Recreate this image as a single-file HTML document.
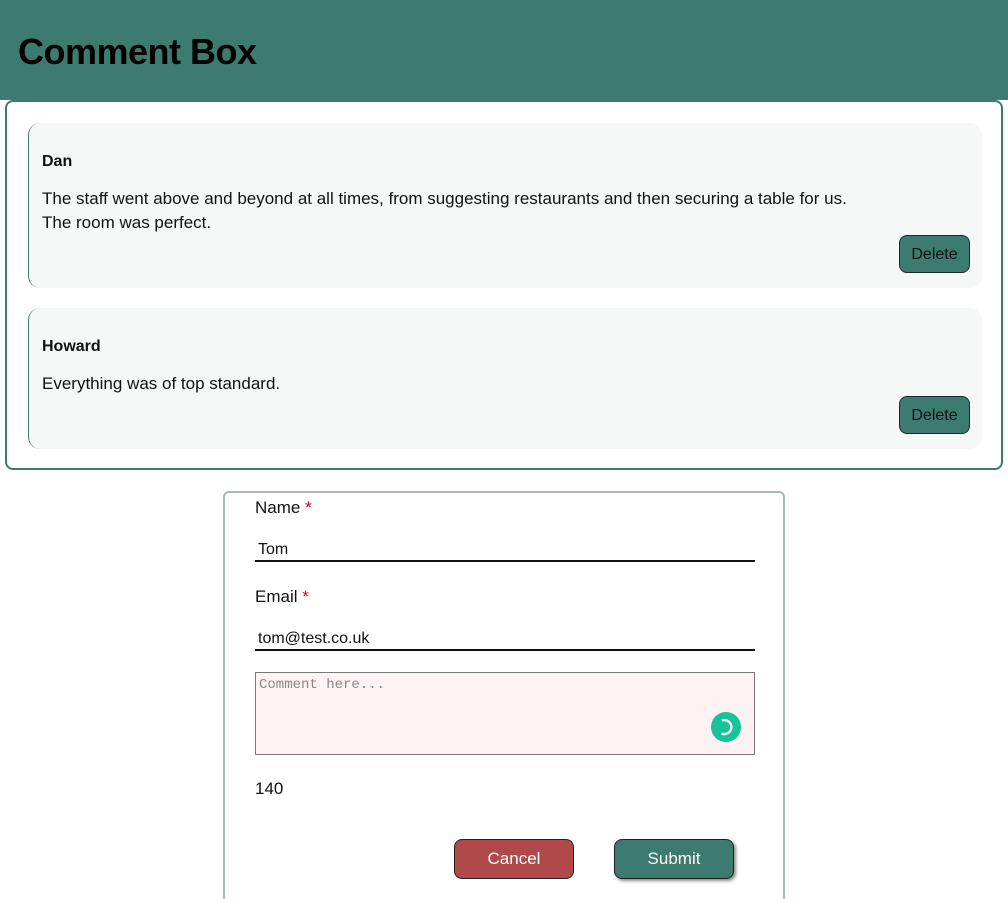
<!DOCTYPE html>
<html style="overflow:hidden;height:899px"><head><style>
body{margin:0;width:1008px;height:899px;overflow:hidden;background:#fff;font-family:"Liberation Sans",sans-serif;color:#111;position:relative}
.hd{position:absolute;left:0;top:0;width:1008px;height:100px;background:#3d7a70}
.hd h1{position:absolute;left:18px;top:31px;margin:0;font-size:36px;font-weight:bold;color:#000;letter-spacing:-0.5px}
.outer{position:absolute;left:5px;top:100px;width:994px;height:366px;border:2px solid #3d7a70;border-radius:8px}
.card{position:absolute;left:21px;width:953px;background:#f6f8f7;border-left:1.5px solid #3d7a70;border-radius:12px}
.name{position:absolute;left:13px;font-weight:bold;font-size:16px}
.txt{position:absolute;left:13px;font-size:17px;line-height:24px;width:920px}
.del{position:absolute;right:12px;width:71px;height:38px;box-sizing:border-box;background:#3d7a70;border:1px solid #1a2a28;border-radius:8px;font-size:16px;text-align:center;line-height:37px;color:#111}
.form{position:absolute;left:223px;top:491px;width:558px;height:440px;border:2px solid #a4bab7;border-radius:6px}
.lab{position:absolute;left:30px;font-size:17px}
.lab b{color:#e00;font-weight:normal}
.inp{position:absolute;left:30px;width:500px;height:24px;border-bottom:2px solid #111;font-size:16px;line-height:24px;padding-left:3px;box-sizing:border-box}
.ta{position:absolute;left:30px;top:179px;width:500px;height:83px;box-sizing:border-box;border:1px solid #777;background:#fff2f2;font-family:"Liberation Mono",monospace;font-size:14px;color:#888;padding:4px 3px}
.btn{position:absolute;top:346px;width:120px;height:40px;box-sizing:border-box;border:1px solid #222;border-radius:8px;color:#fff;font-size:17px;text-align:center;line-height:38px}
</style></head><body>
<div class="hd"><h1>Comment Box</h1></div>
<div class="outer">
 <div class="card" style="top:21px;height:165px">
  <div class="name" style="top:30px">Dan</div>
  <div class="txt" style="top:64px">The staff went above and beyond at all times, from suggesting restaurants and then securing a table for us.<br>The room was perfect.</div>
  <div class="del" style="top:112px">Delete</div>
 </div>
 <div class="card" style="top:206px;height:141px">
  <div class="name" style="top:30px">Howard</div>
  <div class="txt" style="top:64px">Everything was of top standard.</div>
  <div class="del" style="top:88px">Delete</div>
 </div>
</div>
<div class="form">
 <div class="lab" style="top:5px">Name <b>*</b></div>
 <div class="inp" style="top:45px">Tom</div>
 <div class="lab" style="top:94px">Email <b>*</b></div>
 <div class="inp" style="top:134px">tom@test.co.uk</div>
 <div class="ta">Comment here...</div>
 <svg style="position:absolute;left:486px;top:219px" width="30" height="30"><circle cx="15" cy="15" r="15" fill="#17c49a"/><path d="M11 8.5 A7 7 0 1 1 10.5 21.5" stroke="#fff" stroke-width="2.4" fill="none"/></svg>
 <div class="lab" style="top:286px">140</div>
 <div class="btn" style="left:229px;background:#b04a4a">Cancel</div>
 <div class="btn" style="left:389px;background:#3d7a70;box-shadow:2px 2px 3px #888">Submit</div>
</div>
</body></html>
